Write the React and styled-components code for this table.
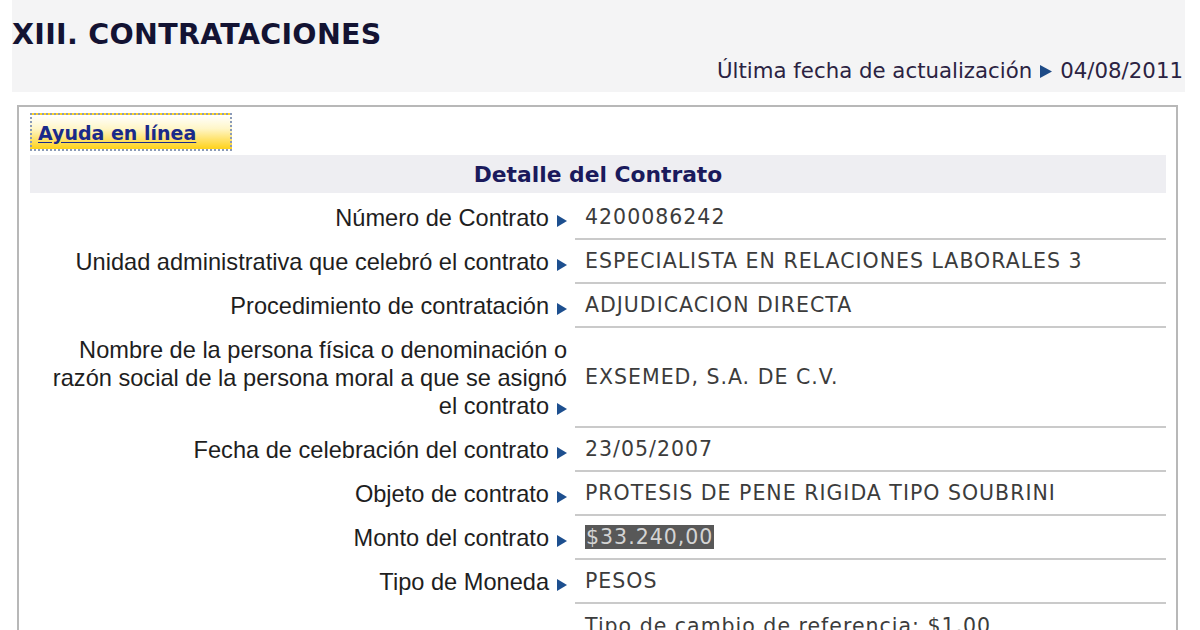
import React from 'react';
import styled, { createGlobalStyle, css } from 'styled-components';

const GlobalStyle = createGlobalStyle`
  html, body {
    margin: 0;
    padding: 0;
    background: #ffffff;
  }
  body {
    width: 1200px;
    height: 630px;
    overflow: hidden;
  }
`

const Page = styled.div`
  width: 1200px;
  height: 630px;
  overflow: hidden;
  background: #fff;
`

const TopBar = styled.div`
  margin: 0 15px 0 12px;
  height: 92px;
  background: #f4f4f5;
  display: flex;
  flex-direction: column;
  box-sizing: border-box;
  padding-top: 19px;
`

const Title = styled.h1`
  margin: 0;
  font-family: "DejaVu Sans", Verdana, sans-serif;
  font-weight: bold;
  font-size: 28.5px;
  line-height: 32px;
  color: #131333;
  letter-spacing: 0.3px;
`

const Updated = styled.div`
  align-self: flex-end;
  margin-top: 7px;
  margin-right: 2px;
  display: flex;
  align-items: center;
  gap: 8px;
  font-family: "DejaVu Sans", Verdana, sans-serif;
  font-size: 21.3px;
  line-height: 26px;
  color: #2b2342;
`

const Card = styled.div`
  margin: 13px 22px 0 17px;
  border: 2px solid #b8b8b8;
  border-bottom: none;
  padding: 6px 10px 0 11px;
  height: 560px;
  box-sizing: border-box;
`

const HelpLink = styled.a`
  display: inline-flex;
  align-items: center;
  width: 202px;
  height: 38px;
  box-sizing: border-box;
  padding: 2px 0 0 6px;
  border: 2px dotted #8a9ab8;
  background: linear-gradient(to bottom, #ffffff 0%, #fff6c8 40%, #ffd21a 100%);
  font-family: "DejaVu Sans", Verdana, sans-serif;
  font-weight: bold;
  font-size: 19px;
  color: #1a2a8a;
  text-decoration: underline;
  text-underline-offset: 2px;
  cursor: pointer;
`

const SectionHead = styled.div`
  margin: 4px 0 3px;
  height: 38px;
  background: #eeeef2;
  display: flex;
  align-items: center;
  justify-content: center;
  font-family: "DejaVu Sans", Verdana, sans-serif;
  font-weight: bold;
  font-size: 21.8px;
  color: #1a1a5c;
`

const Row = styled.div`
  display: grid;
  grid-template-columns: 545px 1fr;
`

const Label = styled.div`
  text-align: right;
  min-height: 28px;
  padding: 8px 8px 8px 7px;
  font-family: "Liberation Sans", Arial, sans-serif;
  font-size: 23.6px;
  line-height: 28px;
  color: #1e1e1e;
`

const Value = styled.div`
  display: flex;
  align-items: center;
  padding: 0 10px;
  border-bottom: ${p => (p.$last ? 'none' : '2px solid #cacaca')};
  font-family: "DejaVu Sans", Verdana, sans-serif;
  font-size: 20.5px;
  letter-spacing: 1px;
  color: #3c3c3c;
`

const Selected = styled.span`
  background: #585858;
  color: #d4d4d4;
  padding: 0 1px;
`

const ArrowSvg = styled.svg`
  display: inline-block;
  width: ${p => p.$w}px;
  height: ${p => p.$h}px;
  vertical-align: -1px;
  ${p => p.$gap && css`margin-left: ${p.$gap}px;`}
`

const Arrow = ({ gap = 8, w = 10, h = 12, color = '#1d4f8f' }) => (
  <ArrowSvg $gap={gap} $w={w} $h={h} viewBox="0 0 10 12" preserveAspectRatio="none">
    <path d="M0 0 L10 6 L0 12 Z" fill={color} />
  </ArrowSvg>
)

const rows = [
  { label: 'Número de Contrato', value: '4200086242' },
  { label: 'Unidad administrativa que celebró el contrato', value: 'ESPECIALISTA EN RELACIONES LABORALES 3' },
  { label: 'Procedimiento de contratación', value: 'ADJUDICACION DIRECTA' },
  { label: 'Nombre de la persona física o denominación o razón social de la persona moral a que se asignó el contrato', value: 'EXSEMED, S.A. DE C.V.' },
  { label: 'Fecha de celebración del contrato', value: '23/05/2007' },
  { label: 'Objeto de contrato', value: 'PROTESIS DE PENE RIGIDA TIPO SOUBRINI' },
  { label: 'Monto del contrato', value: '$33.240,00', selected: true },
  { label: 'Tipo de Moneda', value: 'PESOS' },
  { label: '', value: 'Tipo de cambio de referencia: $1,00', last: true },
]

export default function App() {
  return (
    <Page>
      <GlobalStyle />
      <TopBar>
        <Title>XIII. CONTRATACIONES</Title>
        <Updated>
          <span>Última fecha de actualización</span>
          <Arrow gap={0} w={12} h={13} color="#1d4a86" />
          <span>04/08/2011</span>
        </Updated>
      </TopBar>
      <Card>
        <HelpLink>Ayuda en línea</HelpLink>
        <SectionHead>Detalle del Contrato</SectionHead>
        {rows.map((r, i) => (
          <Row key={i}>
            <Label>
              {r.label}
              {r.label && <Arrow />}
            </Label>
            <Value $last={r.last}>
              {r.selected ? <Selected>{r.value}</Selected> : r.value}
            </Value>
          </Row>
        ))}
      </Card>
    </Page>
  )
}
